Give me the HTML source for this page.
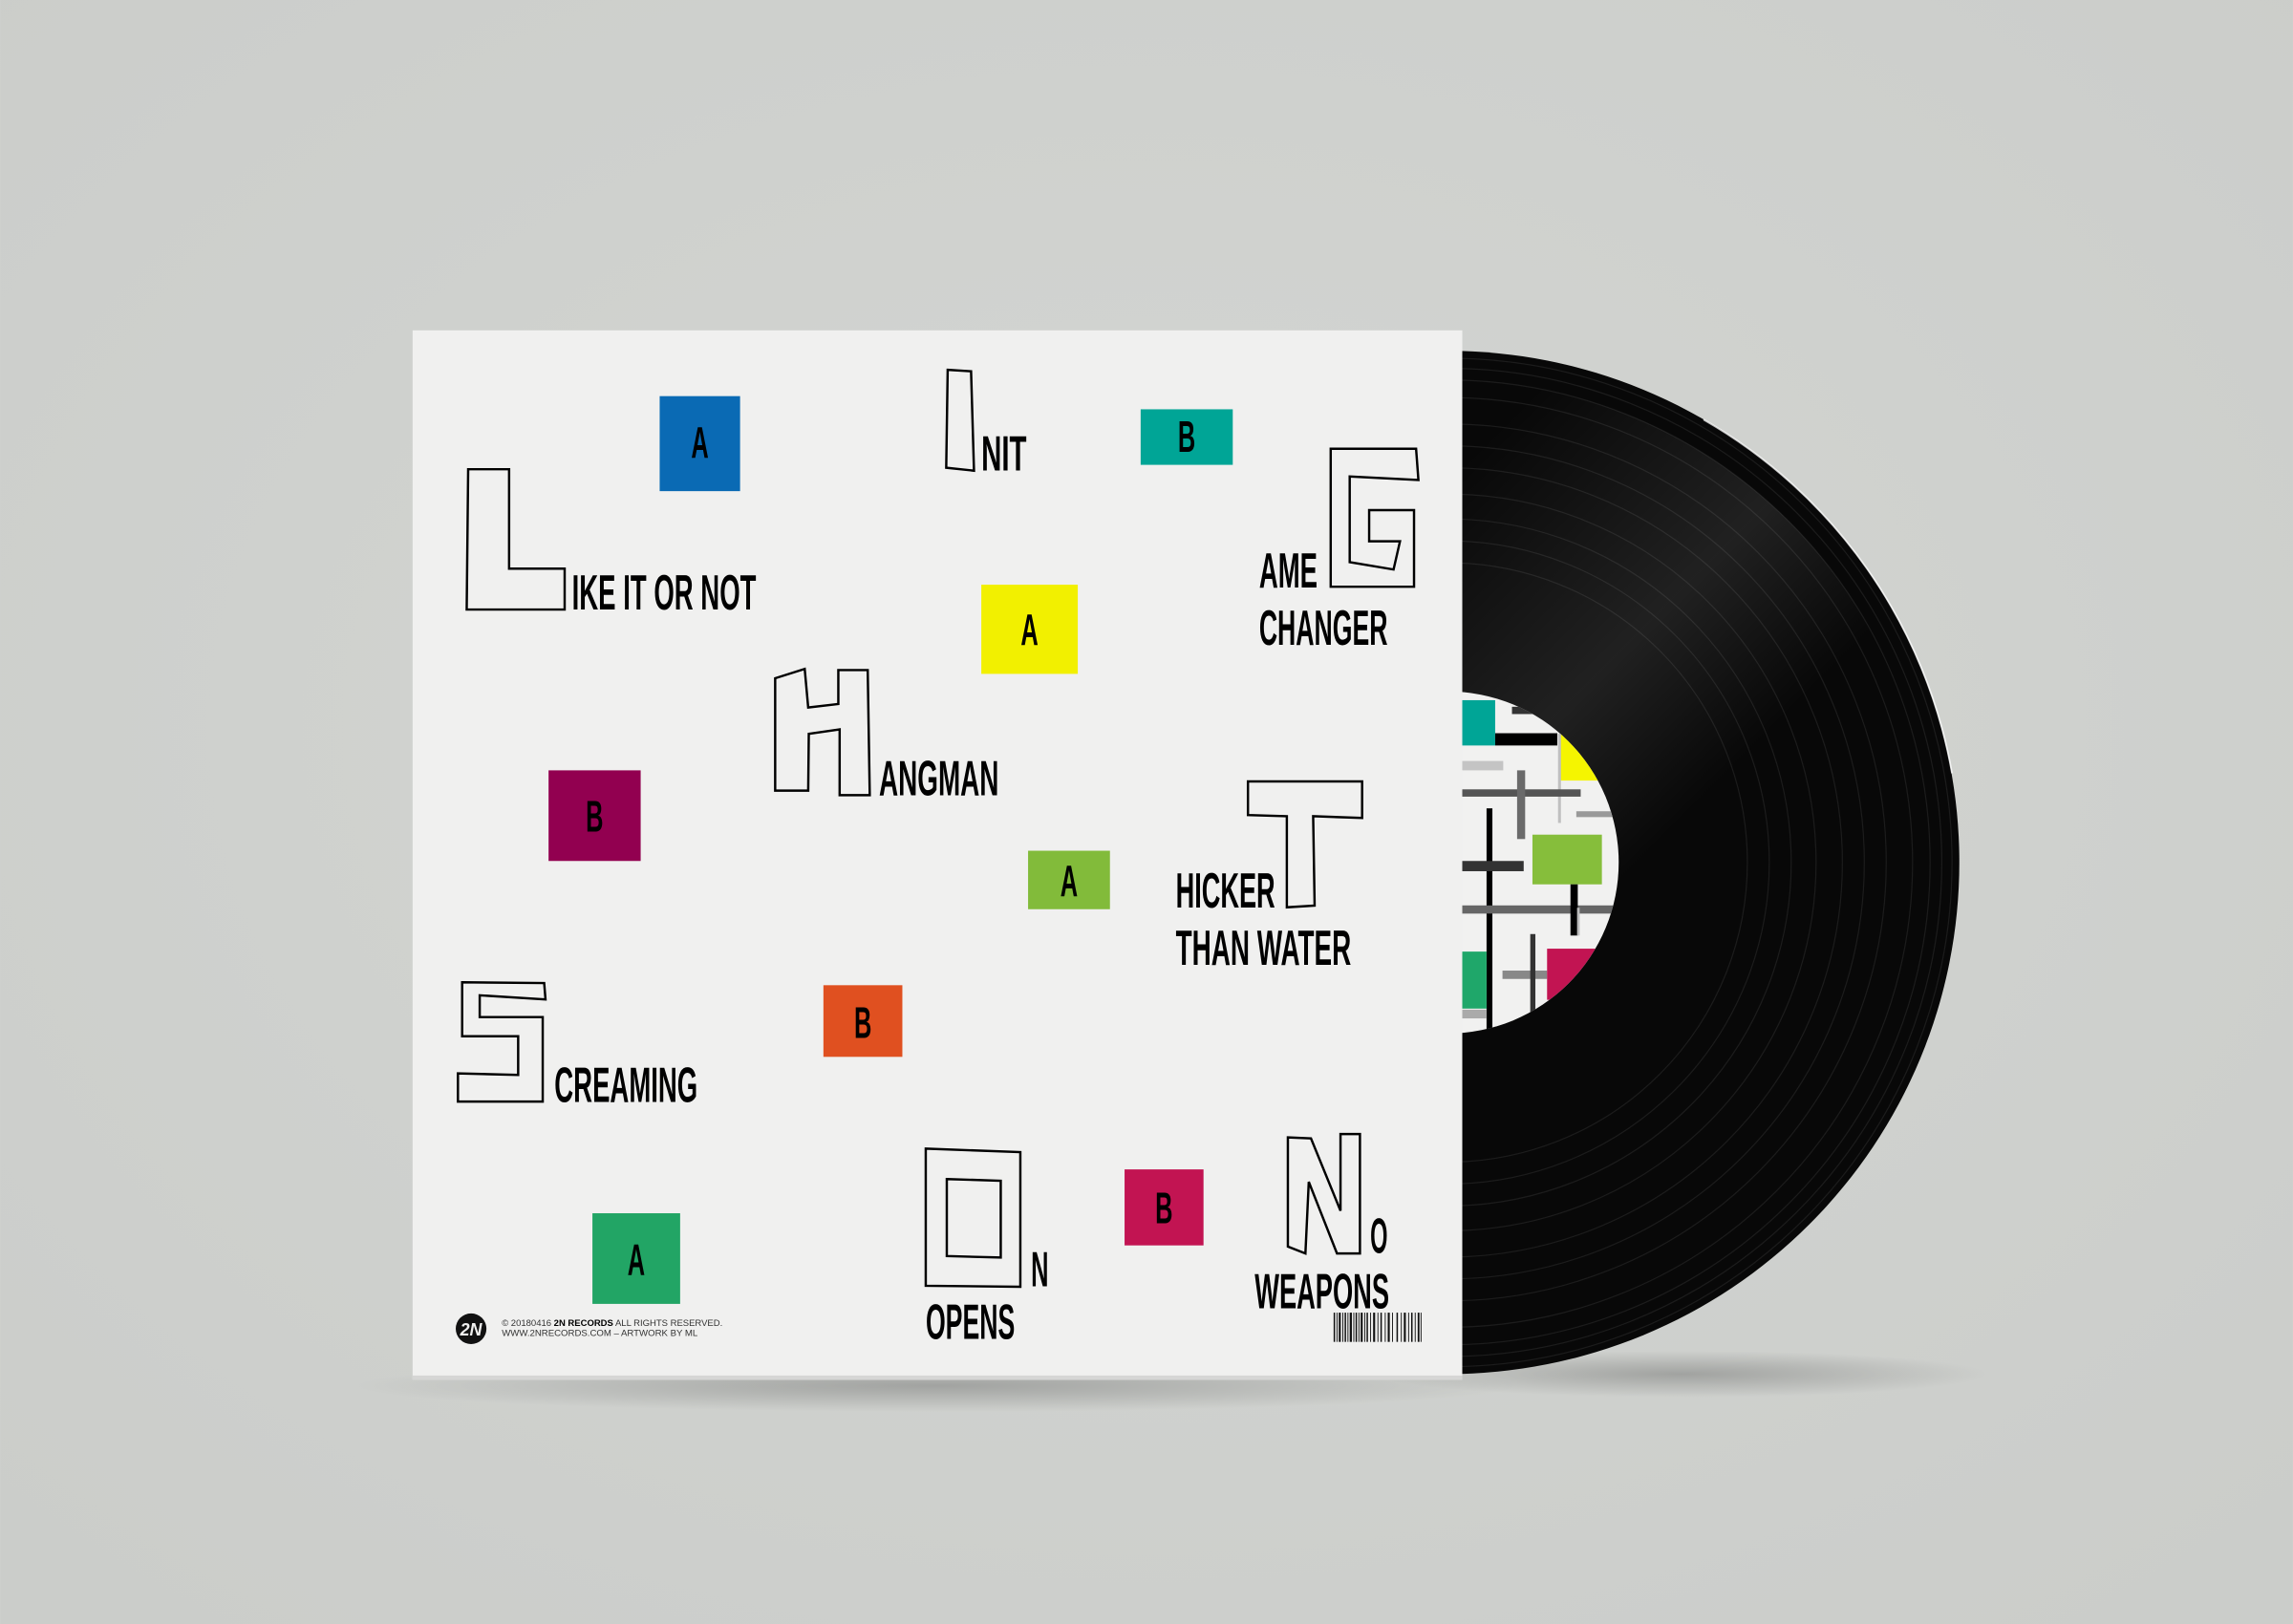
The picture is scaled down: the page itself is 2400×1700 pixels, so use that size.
<!DOCTYPE html>
<html><head><meta charset="utf-8"><style>
html,body{margin:0;padding:0;background:#d0d2cf;}
svg{display:block}
text{font-family:"Liberation Sans Narrow","Liberation Sans",sans-serif;font-weight:bold;fill:#000}
</style></head><body>
<svg width="2400" height="1700" viewBox="0 0 1568 1111" xmlns="http://www.w3.org/2000/svg">
<defs>
<radialGradient id="bg" cx="0.5" cy="0.45" r="0.7">
<stop offset="0" stop-color="#d4d6d3"/><stop offset="1" stop-color="#cbcdca"/>
</radialGradient>
<radialGradient id="shadow" cx="0.5" cy="0.5" r="0.5">
<stop offset="0" stop-color="#000" stop-opacity="0.22"/><stop offset="1" stop-color="#000" stop-opacity="0"/>
</radialGradient>
<linearGradient id="sheen" x1="0" y1="0" x2="1" y2="1">
<stop offset="0.3" stop-color="#fff" stop-opacity="0"/>
<stop offset="0.48" stop-color="#fff" stop-opacity="0.1"/>
<stop offset="0.6" stop-color="#fff" stop-opacity="0"/>
</linearGradient>
<clipPath id="lab"><circle cx="990" cy="590" r="117"/></clipPath>
</defs>
<rect width="1568" height="1111" fill="url(#bg)"/>
<!-- shadows -->
<ellipse cx="640" cy="948" rx="400" ry="18" fill="url(#shadow)"/>
<ellipse cx="1150" cy="940" rx="210" ry="16" fill="url(#shadow)"/>
<!-- record -->
<circle cx="990" cy="590" r="350" fill="#080808"/>
<g fill="none" stroke="#1c1c1c" stroke-width="0.8">
<circle cx="990" cy="590" r="345"/><circle cx="990" cy="590" r="338"/><circle cx="990" cy="590" r="330"/>
<circle cx="990" cy="590" r="318"/><circle cx="990" cy="590" r="300"/><circle cx="990" cy="590" r="285"/>
<circle cx="990" cy="590" r="270"/><circle cx="990" cy="590" r="252"/><circle cx="990" cy="590" r="235"/>
<circle cx="990" cy="590" r="220"/><circle cx="990" cy="590" r="205"/>
</g>
<circle cx="990" cy="590" r="330" fill="url(#sheen)"/>
<path d="M1165 287 A349 349 0 0 1 1335 529" fill="none" stroke="#fff" stroke-opacity="0.75" stroke-width="1.2"/>
<!-- label -->
<circle cx="990" cy="590" r="117" fill="#f1f1f0"/>
<g clip-path="url(#lab)">
<rect x="985" y="479" width="37.5" height="31" fill="#00a596"/>
<rect x="1022.5" y="501.6" width="42.5" height="8.4" fill="#000"/>
<rect x="1034" y="483.5" width="16" height="5" fill="#333"/>
<rect x="1067" y="502" width="40" height="32" fill="#f5f500"/>
<rect x="1065.5" y="502" width="2" height="61" fill="#c0c0c0"/>
<rect x="985" y="520.6" width="43" height="6.4" fill="#c4c4c4"/>
<rect x="985" y="540" width="96" height="5" fill="#555"/>
<rect x="1037.5" y="527" width="5.5" height="47" fill="#6a6a6a"/>
<rect x="1078" y="555" width="30" height="4" fill="#999"/>
<rect x="1016.6" y="553" width="4" height="160" fill="#000"/>
<rect x="1048" y="571" width="47.5" height="34" fill="#86be3b"/>
<rect x="985" y="589" width="57" height="7" fill="#333"/>
<rect x="985" y="619.4" width="125" height="5.6" fill="#666"/>
<rect x="1074" y="605" width="5" height="35" fill="#000"/>
<rect x="1078.5" y="621" width="1.8" height="19" fill="#bbb"/>
<rect x="985" y="651" width="31.6" height="39" fill="#1fa76a"/>
<rect x="985" y="690.7" width="31.6" height="6" fill="#aaa"/>
<rect x="1027.5" y="664" width="30.5" height="5.7" fill="#888"/>
<rect x="1046.5" y="639" width="3.5" height="60" fill="#333"/>
<rect x="1058" y="649" width="45" height="35" fill="#c21452"/>
</g>
<!-- sleeve -->
<rect x="282" y="226" width="718" height="718" fill="#f0f0ef"/>
<rect x="282" y="941" width="718" height="3" fill="#d6d6d5"/>
<!-- colour boxes -->
<rect x="451" y="271" width="55" height="65" fill="#0a6ab4"/>
<rect x="780" y="280" width="63" height="38" fill="#00a596"/>
<rect x="671" y="400" width="66" height="61" fill="#f2f000"/>
<rect x="375" y="527" width="63" height="62" fill="#920050"/>
<rect x="703" y="582" width="56" height="40" fill="#82bb3a"/>
<rect x="563" y="674" width="54" height="49" fill="#e05020"/>
<rect x="405" y="830" width="60" height="62" fill="#22a565"/>
<rect x="769" y="800" width="54" height="52" fill="#c21452"/>
<g font-size="30" text-anchor="middle">
<text x="478.5" y="313" textLength="12" lengthAdjust="spacingAndGlyphs">A</text>
<text x="811.5" y="309" textLength="12" lengthAdjust="spacingAndGlyphs">B</text>
<text x="704" y="441" textLength="12" lengthAdjust="spacingAndGlyphs">A</text>
<text x="406.5" y="569" textLength="12" lengthAdjust="spacingAndGlyphs">B</text>
<text x="731" y="613" textLength="12" lengthAdjust="spacingAndGlyphs">A</text>
<text x="590" y="710" textLength="12" lengthAdjust="spacingAndGlyphs">B</text>
<text x="435" y="872" textLength="12" lengthAdjust="spacingAndGlyphs">A</text>
<text x="796" y="837" textLength="12" lengthAdjust="spacingAndGlyphs">B</text>
</g>
<!-- outline letters -->
<g fill="none" stroke="#000" stroke-width="1.6" stroke-linejoin="miter">
<polygon points="320,321 348,321 348,389 386,389 386,417 319,417"/>
<polygon points="648,253 664,254 666,322 647,320"/>
<polygon points="910,307 968.4,307 970,328.4 923,326 923,384.6 953,389.6 957.4,370.3 936.3,370.3 936.3,349 967,349 967,401.4 910,401.4"/>
<polygon points="530,464 550.2,457.6 552.6,484 573.2,481.6 573.2,458.4 593.3,458.4 594.7,544 574.1,544 574.1,499 553,502 552.6,540.9 530,540.9"/>
<polygon points="853.4,534.6 931.5,534.6 931.5,559.6 898,558.4 899,619.5 880,620.7 880,558.4 853.4,557.6"/>
<polygon points="315.9,672 372,672.5 372.9,683.7 327.9,680.9 327.9,695.8 371,695.8 371,753.6 313,753.6 313,734.3 354.2,735.4 354.2,708.9 315.9,708.9"/>
<polygon points="633,785.8 697.7,788.2 697.7,880.3 633,879.6"/>
<polygon points="647.4,806.6 684.3,807.8 684.3,860.3 647.4,859.3"/>
<polygon points="880.7,778.1 896.5,778.8 916.7,828.3 916.7,775.8 930,775.8 930,857.5 914.3,857.5 895,808.5 892.7,857.5 880.7,852.8"/>
</g>
<!-- titles -->
<g font-size="34">
<text x="391" y="417" textLength="126" lengthAdjust="spacingAndGlyphs">IKE IT OR NOT</text>
<text x="671" y="322" textLength="31" lengthAdjust="spacingAndGlyphs">NIT</text>
<text x="861" y="402" textLength="40" lengthAdjust="spacingAndGlyphs">AME</text>
<text x="861" y="441" textLength="88" lengthAdjust="spacingAndGlyphs">CHANGER</text>
<text x="601" y="544" textLength="82" lengthAdjust="spacingAndGlyphs">ANGMAN</text>
<text x="804" y="621" textLength="68" lengthAdjust="spacingAndGlyphs">HICKER</text>
<text x="804" y="660" textLength="120" lengthAdjust="spacingAndGlyphs">THAN WATER</text>
<text x="379" y="754" textLength="98" lengthAdjust="spacingAndGlyphs">CREAMING</text>
<text x="705" y="880" textLength="12" lengthAdjust="spacingAndGlyphs">N</text>
<text x="633" y="916" textLength="61" lengthAdjust="spacingAndGlyphs">OPENS</text>
<text x="937" y="857" textLength="12" lengthAdjust="spacingAndGlyphs">O</text>
<text x="858" y="895" textLength="92" lengthAdjust="spacingAndGlyphs">WEAPONS</text>
</g>
<!-- footer -->
<circle cx="322" cy="909" r="10.5" fill="#111"/>
<text x="322" y="913.5" font-size="12" style="fill:#f0f0ef;font-style:italic" text-anchor="middle" textLength="15" lengthAdjust="spacingAndGlyphs">2N</text>
<text x="343" y="907" font-size="6" textLength="151" lengthAdjust="spacingAndGlyphs" style="font-weight:normal;fill:#333">© 20180416 <tspan style="font-weight:bold;fill:#000">2N RECORDS</tspan> ALL RIGHTS RESERVED.</text>
<text x="343" y="914" font-size="6" textLength="134" lengthAdjust="spacingAndGlyphs" style="font-weight:normal;fill:#333">WWW.2NRECORDS.COM – ARTWORK BY ML</text>
<!-- barcode -->
<g fill="#111">
<rect x="912" y="898" width="1" height="20"/><rect x="914" y="898" width="0.6" height="20"/><rect x="915.5" y="898" width="1.4" height="20"/>
<rect x="918" y="898" width="0.6" height="20"/><rect x="919.5" y="898" width="1" height="20"/><rect x="921.5" y="898" width="0.6" height="20"/>
<rect x="923" y="898" width="1.5" height="20"/><rect x="925.5" y="898" width="0.6" height="20"/><rect x="927" y="898" width="1" height="20"/>
<rect x="929" y="898" width="0.6" height="20"/><rect x="930.5" y="898" width="1.4" height="20"/><rect x="933" y="898" width="0.6" height="20"/>
<rect x="934.5" y="898" width="1" height="20"/><rect x="937" y="898" width="0.6" height="20"/><rect x="939" y="898" width="1.4" height="20"/>
<rect x="942" y="898" width="0.6" height="20"/><rect x="944" y="898" width="1" height="20"/><rect x="947" y="898" width="0.6" height="20"/>
<rect x="949" y="898" width="1.4" height="20"/><rect x="952" y="898" width="0.6" height="20"/><rect x="955" y="898" width="1" height="20"/>
<rect x="958" y="898" width="0.6" height="20"/><rect x="960" y="898" width="1.4" height="20"/><rect x="963" y="898" width="0.6" height="20"/>
<rect x="965" y="898" width="1" height="20"/><rect x="967.5" y="898" width="0.6" height="20"/><rect x="969.5" y="898" width="1.2" height="20"/>
<rect x="971.5" y="898" width="0.6" height="20"/>
</g>
</svg>
</body></html>
